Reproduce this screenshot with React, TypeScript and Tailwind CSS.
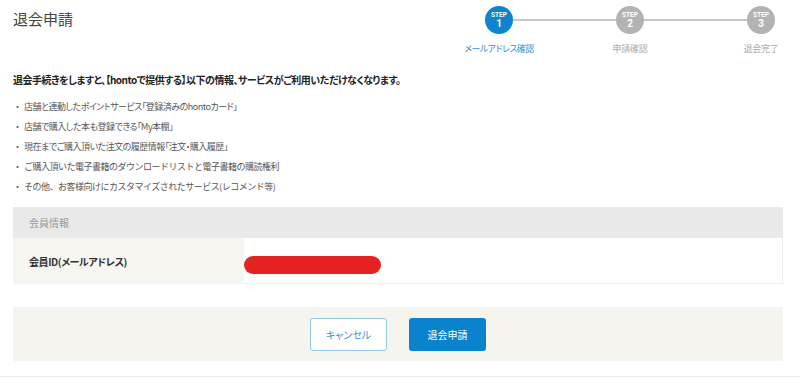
import React from "react";

const steps = [
  { n: "1", label: "メールアドレス確認", active: true },
  { n: "2", label: "申請確認", active: false },
  { n: "3", label: "退会完了", active: false },
];

const items = [
  { t: "店舗と連動したポイントサービス「登録済みのhontoカード」", palt: true },
  { t: "店舗で購入した本も登録できる「My本棚」", palt: true },
  { t: "現在までご購入頂いた注文の履歴情報「注文・購入履歴」", palt: true },
  { t: "ご購入頂いた電子書籍のダウンロードリストと電子書籍の購読権利", palt: false },
  { t: "その他、お客様向けにカスタマイズされたサービス(レコメンド等)", palt: false },
];

export default function App() {
  return (
    <div className="w-[800px] h-[385px] bg-white overflow-hidden font-['Noto_Sans_CJK_JP',sans-serif] text-[#333]">
      <div className="flex justify-between pl-[13px] pr-[4px] pt-[6px]">
        <h1 className="mt-[2px] text-[15px] leading-[22px] text-[#444] font-normal">退会申請</h1>
        <div className="relative flex gap-[61px]">
          <div className="absolute left-[35px] right-[35px] top-[13px] h-[2px] bg-[#c8c8c8]" />
          {steps.map((s) => (
            <div key={s.n} className="relative w-[70px] flex flex-col items-center">
              <div
                className={
                  s.active
                    ? "w-[28px] h-[28px] rounded-full bg-[#0d84cf] flex flex-col items-center justify-center text-white font-['Roboto',sans-serif] font-bold"
                    : "w-[28px] h-[28px] rounded-full bg-[#b3b3b3] flex flex-col items-center justify-center text-white font-['Roboto',sans-serif] font-bold"
                }
              >
                <span className="text-[6.5px] leading-[7px]">STEP</span>
                <span className="text-[10px] leading-[10px]">{s.n}</span>
              </div>
              <div
                className={
                  s.active
                    ? "mt-[9px] text-[9px] leading-[12px] tracking-[-0.6px] text-[#3b8fd6] whitespace-nowrap [font-feature-settings:'palt']"
                    : "mt-[9px] text-[9px] leading-[12px] tracking-[-0.2px] text-[#aaaaaa] whitespace-nowrap [font-feature-settings:'palt']"
                }
              >
                {s.label}
              </div>
            </div>
          ))}
        </div>
      </div>

      <div className="px-[13px] pr-[17px]">
        <p className="mt-[17px] text-[10px] leading-[16px] tracking-[-0.5px] font-bold text-[#222] whitespace-nowrap [font-feature-settings:'palt']">
          退会手続きをしますと、【hontoで提供する】以下の情報、サービスがご利用いただけなくなります。
        </p>
        <ul className="mt-[9px] text-[9px] leading-[20px] tracking-[-0.5px] text-[#555]">
          {items.map((it) => (
            <li key={it.t} className="flex whitespace-nowrap">
              <span className="w-[11px]">・</span>
              <span className={it.palt ? "[font-feature-settings:'palt']" : ""}>{it.t}</span>
            </li>
          ))}
        </ul>

        <div className="mt-[10px]">
          <div className="h-[31px] bg-[#e9e9e9] flex items-center pl-[16px] text-[10px] text-[#999] [font-feature-settings:'palt']">
            会員情報
          </div>
          <div className="flex h-[46px]">
            <div className="w-[231px] bg-[#f6f5ef] flex items-center pl-[16px] text-[10px] tracking-[-0.4px] font-bold text-[#333] [font-feature-settings:'palt']">
              会員ID(メールアドレス)
            </div>
            <div className="flex-1 bg-white border-r border-b border-[#eeeeee]">
              <div className="mt-[18px] w-[137px] h-[18px] rounded-full bg-[#e52222]" />
            </div>
          </div>
        </div>

        <div className="mt-[23px] h-[54px] bg-[#f5f4ee] flex items-center justify-center gap-[22px]">
          <button className="w-[77px] h-[33px] rounded-[3px] bg-white border border-[#90c9ec] text-[#3d8fd1] text-[10px] [font-feature-settings:'palt']">
            キャンセル
          </button>
          <button className="w-[77px] h-[33px] rounded-[3px] bg-[#0a83ce] text-white text-[10px] [font-feature-settings:'palt']">
            退会申請
          </button>
        </div>
      </div>
      <div className="mt-[15px] h-px bg-[#eeeeee]" />
    </div>
  );
}
